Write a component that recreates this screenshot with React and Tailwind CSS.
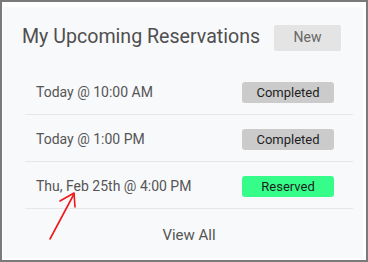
import React from 'react';

const reservations = [
    { when: 'Today @ 10:00 AM', status: 'Completed' },
    { when: 'Today @ 1:00 PM', status: 'Completed' },
    { when: 'Thu, Feb 25th @ 4:00 PM', status: 'Reserved' },
];

function StatusBadge({ status }) {
    const color = status === 'Reserved' ? 'bg-[#36fd8a]' : 'bg-[#cbcbcb]';
    return (
        <span className={`${color} w-[92px] h-[21px] rounded-[3px] flex items-center justify-center text-[13px] text-[#1e1e1e]`}>
            {status}
        </span>
    );
}

export default function App() {
    return (
        <div className="relative w-[368px] h-[262px] bg-white border-2 border-[#7a7a7a] pt-[5px] pl-[1px] pr-[3px] pb-[2px] font-['Roboto',sans-serif]">
            <div className="w-full h-full bg-[#f8f9fb] flex flex-col">
                {/* header */}
                <div className="h-[61px] flex items-center justify-between pl-[19px] pr-[22px]">
                    <h2 className="text-[19.6px] text-[#4f4f4f] leading-none -mt-[1px]">My Upcoming Reservations</h2>
                    <button className="w-[67px] h-[26px] bg-[#e4e4e4] rounded-[2px] text-[14px] text-[#666]">New</button>
                </div>

                {/* list */}
                <div className="ml-[22px] mr-[10px]">
                    {reservations.map((r, i) => (
                        <div key={i} className="h-[47px] pt-[3px] border-b border-[#e6e7ea] flex items-center justify-between pl-[11px] pr-[19px]">
                            <span className="text-[14px] text-[#555]">{r.when}</span>
                            <StatusBadge status={r.status} />
                        </div>
                    ))}
                </div>

                <div className="flex-1 flex items-center justify-center pl-[12px] pt-[3px]">
                    <span className="text-[15px] text-[#555]">View All</span>
                </div>
            </div>

            {/* red annotation arrow */}
            <svg className="absolute left-0 top-0 pointer-events-none" width="368" height="262" viewBox="0 0 368 262">
                <path d="M48 237 L72 192" stroke="#f01818" strokeWidth="1.6" fill="none" strokeLinecap="round" />
                <path d="M58 199 L72 191 L73 205" stroke="#f01818" strokeWidth="1.6" fill="none" strokeLinecap="round" strokeLinejoin="round" />
            </svg>
        </div>
    );
}
